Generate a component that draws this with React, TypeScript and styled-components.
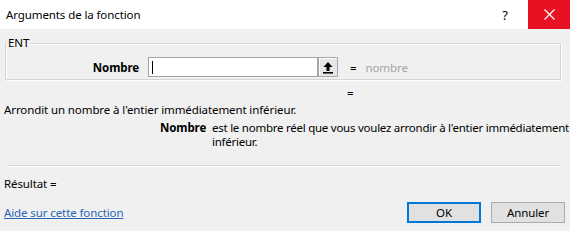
import styled, { createGlobalStyle } from "styled-components";

const GlobalStyle = createGlobalStyle`
  html, body {
    margin: 0;
    padding: 0;
  }

  body {
    background: #f0f0f0;
    color: #000;
    font-family: "Noto Sans", "Open Sans", sans-serif;
    font-size: 11.5px;
    letter-spacing: -0.1px;
  }
`;

export default function App() {
  return (
    <>
      <GlobalStyle />
      <Dialog>
        <TitleBar>
          <Title>Arguments de la fonction</Title>
          <HelpButton>?</HelpButton>
          <CloseButton>
            <svg width="11" height="11" viewBox="0 0 11 11">
              <path d="M0.5 0.5 L10.5 10.5 M10.5 0.5 L0.5 10.5" stroke="#fff" strokeWidth="1.2" />
            </svg>
          </CloseButton>
        </TitleBar>

        <ArgGroup>
          <Legend>ENT</Legend>
          <ArgRow>
            <ArgLabel>Nombre</ArgLabel>
            <ArgInput>
              <Caret />
            </ArgInput>
            <RefButton>
              <svg width="12" height="13" viewBox="0 0 12 13">
                <path d="M6 1 L10.5 6 L7.5 6 L7.5 10 L4.5 10 L4.5 6 L1.5 6 Z" fill="#000" />
                <rect x="1" y="11" width="10" height="1.6" fill="#000" />
              </svg>
            </RefButton>
            <Equals>=</Equals>
            <ArgValue>nombre</ArgValue>
          </ArgRow>
        </ArgGroup>

        <ResultEquals>=</ResultEquals>
        <Summary>Arrondit un nombre à l'entier immédiatement inférieur.</Summary>

        <ArgHelp>
          <ArgHelpName>Nombre</ArgHelpName>
          <ArgHelpText>
            est le nombre réel que vous voulez arrondir à l'entier immédiatement
            <br />
            inférieur.
          </ArgHelpText>
        </ArgHelp>

        <Separator />

        <Result>Résultat =</Result>

        <Footer>
          <HelpLink href="#">Aide sur cette fonction</HelpLink>
          <Buttons>
            <DialogButton $primary>OK</DialogButton>
            <DialogButton>Annuler</DialogButton>
          </Buttons>
        </Footer>
      </Dialog>
    </>
  );
}

const Dialog = styled.div`
  display: flex;
  flex-direction: column;

  width: 570px;
  height: 231px;
  overflow: hidden;

  background: #f0f0f0;
`;

const TitleBar = styled.div`
  display: flex;
  align-items: center;

  height: 29px;
  background: #fff;
`;

const Title = styled.div`
  flex: 1;
  padding-left: 6px;
  padding-bottom: 1px;
  font-size: 11.5px;
`;

const HelpButton = styled.div`
  display: flex;
  align-items: center;
  justify-content: center;

  width: 46px;
  height: 29px;
  font-size: 13px;
`;

const CloseButton = styled.div`
  display: flex;
  align-items: center;
  justify-content: center;

  width: 42px;
  height: 29px;
  background: #e81123;
`;

const ArgGroup = styled.fieldset`
  margin: 6px 9px 0 5px;
  padding: 0 0 2px 0;

  border: 1px solid #d5d5d5;
  box-shadow: inset 1px 1px 0 #fff, 1px 1px 0 #fff;
`;

const Legend = styled.legend`
  margin-left: 1px;
  padding: 0 1px;
  line-height: 16px;
`;

const ArgRow = styled.div`
  display: flex;
  align-items: center;

  height: 20px;
  margin-top: 6px;
`;

const ArgLabel = styled.div`
  width: 133px;
  margin-right: 9px;

  font-weight: 700;
  text-align: right;
`;

const ArgInput = styled.div`
  display: flex;
  align-items: center;

  box-sizing: border-box;
  width: 170px;
  height: 20px;
  padding-left: 3px;

  background: #fff;
  border: 1px solid #a3a3a3;
`;

const Caret = styled.span`
  width: 1px;
  height: 13px;
  background: #000;
`;

const RefButton = styled.div`
  display: flex;
  align-items: center;
  justify-content: center;

  box-sizing: border-box;
  width: 20px;
  height: 20px;

  background: #e6e6e6;
  border: 1px solid #a8a8a8;
  box-shadow: inset 1px 1px 0 #fff;
`;

const Equals = styled.span`
  margin-left: 12px;
`;

const ArgValue = styled.span`
  margin-left: 9px;
  color: #a6a6a6;
`;

const ResultEquals = styled.div`
  height: 14px;
  margin-top: 6px;
  padding-left: 347px;
  line-height: 14px;
`;

const Summary = styled.div`
  margin-top: 2px;
  padding-left: 4px;
  line-height: 16px;
`;

const ArgHelp = styled.div`
  display: flex;

  margin-top: 3px;
  padding-left: 160px;
  line-height: 14px;
`;

const ArgHelpName = styled.div`
  width: 52px;
  flex-shrink: 0;
  font-weight: 700;
  white-space: nowrap;
`;

const ArgHelpText = styled.div`
  flex: 1;
  white-space: nowrap;
  letter-spacing: -0.25px;
`;

const Separator = styled.div`
  height: 1px;
  margin: 16px 10px 0 8px;

  background: #d5d5d5;
  box-shadow: 0 1px 0 #fff;
`;

const Result = styled.div`
  margin-top: 10px;
  padding-left: 4px;
  line-height: 16px;
`;

const Footer = styled.div`
  display: flex;
  align-items: center;
  justify-content: space-between;

  margin-top: 10px;
  padding: 0 5px 0 4px;
`;

const HelpLink = styled.a`
  color: #2a66b0;
  text-decoration: underline;
`;

const Buttons = styled.div`
  display: flex;
  gap: 10px;
`;

const DialogButton = styled.button<{ $primary?: boolean }>`
  box-sizing: border-box;
  width: 74px;
  height: 21px;
  padding: 0;

  background: #e1e1e1;
  border: 1px solid ${(p) => (p.$primary ? "#0078d7" : "#adadad")};
  box-shadow: ${(p) => (p.$primary ? "inset 0 0 0 1px #0078d7" : "none")};

  color: #000;
  font-family: inherit;
  font-size: 11.5px;
  letter-spacing: inherit;
`;
